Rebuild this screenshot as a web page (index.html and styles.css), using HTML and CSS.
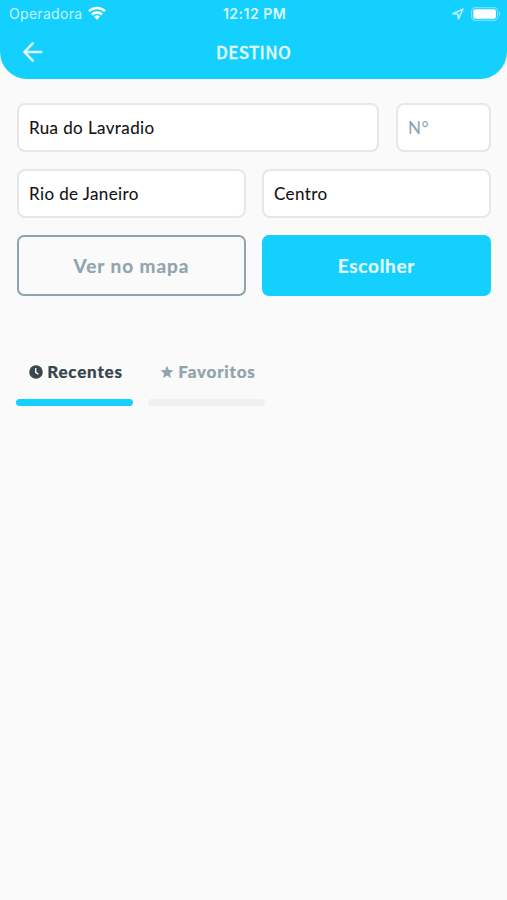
FILE: index.html
```html
<!DOCTYPE html>
<html lang="pt-BR">
<head>
    <meta charset="UTF-8">
    <meta name="viewport" content="width=device-width, initial-scale=1.0">
    <title>Destino</title>
    <link rel="stylesheet" href="styles.css">
</head>
<body>
    <header class="header">
        <div class="status">
            <div class="status-left">
                <span class="carrier">Operadora</span>
                <svg class="wifi" width="18" height="14" viewBox="0 0 18 14" fill="none" stroke="#fff" stroke-width="2.5">
                    <path d="M1 5.2a11.3 11.3 0 0 1 16 0"/>
                    <path d="M3.9 8.5a7.2 7.2 0 0 1 10.2 0"/>
                    <path d="M9 13.7L6.1 10.8a4.1 4.1 0 0 1 5.8 0z" fill="#fff" stroke="none"/>
                </svg>
            </div>
            <span class="time">12:12 PM</span>
            <div class="status-right">
                <svg width="12" height="12" viewBox="0 0 12 12" fill="none" stroke="#c4f4ff" stroke-width="1.5" stroke-linejoin="round">
                    <path d="M10.9 1.1L1 5.7l4.9.5.5 4.8z"/>
                </svg>
                <svg width="30" height="14" viewBox="0 0 30 14">
                    <rect x=".6" y=".6" width="26" height="12.8" rx="3.8" fill="none" stroke="#6fe2ff" stroke-width="1.2"/>
                    <rect x="2.3" y="2.3" width="22.6" height="9.4" rx="2" fill="#fff"/>
                    <path d="M28 4.8c1.6.6 1.6 3.8 0 4.4z" fill="#7fe5ff"/>
                </svg>
            </div>
        </div>
        <div class="nav">
            <a href="#" class="back" aria-label="Voltar">
                <svg width="20" height="20" viewBox="0 0 20 20" fill="none" stroke="#e2faff" stroke-width="2.5" stroke-linecap="round" stroke-linejoin="round">
                    <path d="M18.2 10H1.6M9.7 1.4L1.4 10l8.3 8.6"/>
                </svg>
            </a>
            <h1 class="title">DESTINO</h1>
        </div>
    </header>

    <main class="content">
        <form class="form">
            <div class="row row-street">
                <input type="text" class="field" value="Rua do Lavradio">
                <input type="text" class="field" placeholder="N°">
            </div>
            <div class="row">
                <input type="text" class="field" value="Rio de Janeiro">
                <input type="text" class="field" value="Centro">
            </div>
            <div class="row">
                <button type="button" class="btn btn-outline">Ver no mapa</button>
                <button type="button" class="btn btn-primary">Escolher</button>
            </div>
        </form>

        <nav class="tabs">
            <a href="#" class="tab active">
                <span class="tab-label">
                    <svg width="14" height="14" viewBox="0 0 14 14">
                        <circle cx="7" cy="7" r="6.8" fill="#37474f"/>
                        <path d="M6.7 3v4.3l2.7 1.9" fill="none" stroke="#fafbfb" stroke-width="1.4"/>
                    </svg>
                    <span>Recentes</span>
                </span>
            </a>
            <a href="#" class="tab">
                <span class="tab-label">
                    <svg width="14" height="14" viewBox="0 0 14 14" fill="#90a4ae">
                        <path d="M7 .7l1.8 4.2 4.7.4-3.6 3 1.1 4.6L7 10.5l-4 2.4 1.1-4.6-3.6-3 4.7-.4z"/>
                    </svg>
                    <span>Favoritos</span>
                </span>
            </a>
        </nav>
    </main>
</body>
</html>
```

FILE: styles.css
```css
* {box-sizing: border-box;}
body {margin: 0; min-height: 100vh; background-color: #fafafa; font-family: Lato, "Open Sans", sans-serif;}
a {text-decoration: none;}
svg {display: block; flex: none;}

.header {height: 79px; background-color: #14d0ff; border-radius: 0 0 27px 27px; color: #fff;}
.status {display: grid; grid-template-columns: 1fr auto 1fr; align-items: center; height: 27px; padding: 0 6px 0 9px; font-family: Inter, "Liberation Sans", sans-serif;}
.status-left {display: flex; align-items: center; gap: 6px;}
.carrier {font-size: 14px; letter-spacing: 0.3px; color: #c4f4ff;}
.wifi {margin-top: -2px;}
.time {margin-right: 1px; font-size: 14px; font-weight: 600; letter-spacing: 0.5px; color: #d8f8ff;}
.status-right {display: flex; align-items: center; justify-content: flex-end; gap: 7px;}

.nav {display: grid; grid-template-columns: 1fr auto 1fr; align-items: center; height: 50px; padding: 0 23px;}
.title {margin: 0; font-family: "Noto Sans CJK JP", "Noto Sans", sans-serif; font-size: 17px; font-weight: 500; line-height: 24px; letter-spacing: 0.3px; color: #e2faff; -webkit-text-stroke: 0.3px #e2faff;}

.content {padding: 24px 16px 0 17px;}
.form {display: flex; flex-direction: column; gap: 17px;}
.row {display: grid; grid-template-columns: 1fr 1fr; gap: 16px;}
.row-street {grid-template-columns: 1fr 95px; gap: 17px;}
.field {width: 100%; height: 49px; padding: 0 10px 1px; border: 2px solid #e5e7e8; border-radius: 8px; background-color: #fff; font-family: inherit; font-size: 17px; letter-spacing: 0.4px; color: #111; -webkit-text-stroke: 0.1px; outline: 0;}
.field::placeholder {color: #90a4ae; opacity: 1;}
.btn {height: 61px; padding: 0; border: 0; border-radius: 7px; font-family: inherit; font-size: 19px; font-weight: 700; letter-spacing: 0.7px; -webkit-text-stroke: 0.2px;}
.btn-outline {border: 2px solid #90a4ae; background-color: transparent; color: #90a4ae; letter-spacing: 0.95px;}
.btn-primary {background-color: #14d0ff; color: #e2faff;}

.tabs {display: flex; gap: 15px; margin: 62px 0 0 -1px;}
.tab {width: 117px; color: #90a4ae; font-size: 17px; font-weight: 900; letter-spacing: 0.8px; -webkit-text-stroke: 0.2px;}
.tab-label {display: flex; align-items: center; justify-content: center; gap: 4px; height: 27px; padding-left: 3px;}
.tab::after {content: ""; display: block; height: 7px; margin-top: 14px; border-radius: 4px; background-color: #eff0f0;}
.tab.active {color: #37474f;}
.tab.active::after {background-color: #14d0ff;}
```
